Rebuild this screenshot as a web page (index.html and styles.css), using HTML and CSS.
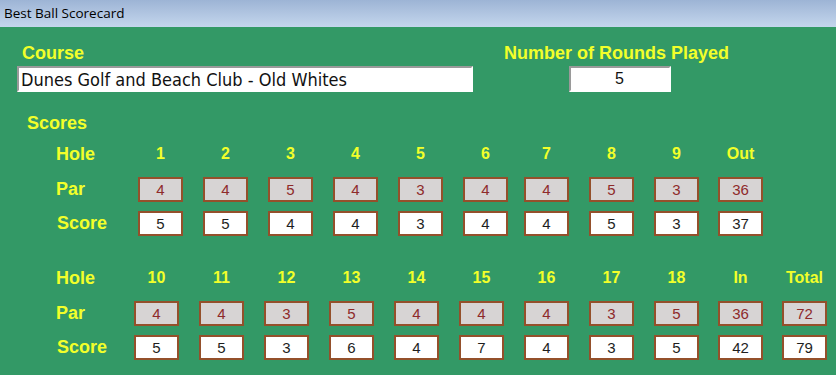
FILE: index.html
```html
<!DOCTYPE html>
<html lang="en">
<head>
<meta charset="UTF-8">
<title>Best Ball Scorecard</title>
<link rel="stylesheet" href="styles.css">
</head>
<body>
    <div class="titlebar">Best Ball Scorecard</div>
    <div class="form">
        <div class="top">
            <div class="field course">
                <label for="course">Course</label>
                <input type="text" id="course" value="Dunes Golf and Beach Club - Old Whites">
            </div>
            <div class="field rounds">
                <label for="rounds">Number of Rounds Played</label>
                <input type="text" id="rounds" value="5">
            </div>
        </div>

        <div class="section">Scores</div>

        <div class="card front">
            <div class="lbl">Hole</div>
            <div class="hd">1</div><div class="hd">2</div><div class="hd">3</div><div class="hd">4</div><div class="hd">5</div>
            <div class="hd">6</div><div class="hd">7</div><div class="hd">8</div><div class="hd">9</div><div class="hd">Out</div>

            <div class="lbl">Par</div>
            <div class="box par">4</div><div class="box par">4</div><div class="box par">5</div><div class="box par">4</div><div class="box par">3</div>
            <div class="box par">4</div><div class="box par">4</div><div class="box par">5</div><div class="box par">3</div><div class="box par">36</div>

            <div class="lbl score-lbl">Score</div>
            <div class="box">5</div><div class="box">5</div><div class="box">4</div><div class="box">4</div><div class="box">3</div>
            <div class="box">4</div><div class="box">4</div><div class="box">5</div><div class="box">3</div><div class="box">37</div>
        </div>

        <div class="card back">
            <div class="lbl">Hole</div>
            <div class="hd">10</div><div class="hd">11</div><div class="hd">12</div><div class="hd">13</div><div class="hd">14</div>
            <div class="hd">15</div><div class="hd">16</div><div class="hd">17</div><div class="hd">18</div><div class="hd">In</div>
            <div class="hd">Total</div>

            <div class="lbl">Par</div>
            <div class="box par">4</div><div class="box par">4</div><div class="box par">3</div><div class="box par">5</div><div class="box par">4</div>
            <div class="box par">4</div><div class="box par">4</div><div class="box par">3</div><div class="box par">5</div><div class="box par">36</div>
            <div class="box par">72</div>

            <div class="lbl score-lbl">Score</div>
            <div class="box">5</div><div class="box">5</div><div class="box">3</div><div class="box">6</div><div class="box">4</div>
            <div class="box">7</div><div class="box">4</div><div class="box">3</div><div class="box">5</div><div class="box">42</div>
            <div class="box">79</div>
        </div>
    </div>
</body>
</html>
```
FILE: styles.css
```css
body {
    margin: 0;
    padding: 0;
    background-color: #339966;
    font-family: "Liberation Sans", Arial, sans-serif;
    height: 375px;
    overflow: hidden;
}
.titlebar {
    height: 27px;
    box-sizing: border-box;
    padding: 5px 0 0 4px;
    font: 13.5px/16px "Open Sans", "DejaVu Sans", sans-serif;
    color: #000;
    background: linear-gradient(#9db4d5, #c4d6ed);
}
.form {
    padding: 16px 0 0 17px;
}
.top {
    display: flex;
    gap: 31px;
}
.field {
    display: flex;
    flex-direction: column;
}
label,
.section,
.lbl {
    font-weight: bold;
    font-size: 18px;
    line-height: 20px;
    color: #f2ff2a;
}
.course label {
    margin-left: 5px;
    margin-bottom: 3px;
}
.rounds {
    align-items: center;
}
.rounds label {
    margin-bottom: 3px;
}
input[type="text"] {
    box-sizing: border-box;
    height: 26px;
    margin: 0;
    background: #fff;
    border: 2px solid #fff;
    border-top-color: #9a9a9a;
    border-left-color: #9a9a9a;
    color: #111;
    outline: none;
}
#course {
    width: 456px;
    padding: 0 2px;
    font-family: "DejaVu Sans", sans-serif;
    font-stretch: condensed;
    font-size: 18px;
}
#rounds {
    width: 102px;
    margin-left: 6px;
    text-align: center;
    font: 16px "Liberation Sans", Arial, sans-serif;
}
.section {
    margin: 21px 0 0 10px;
}
.card {
    display: grid;
    grid-template-rows: 26px 25px 25px;
    row-gap: 9px;
    margin-left: 39px;
    margin-top: 9px;
}
.front {
    grid-template-columns: 82px repeat(5, 65px) 61px 65px 65px 64px 45px;
}
.back {
    grid-template-columns: 78px repeat(8, 65px) 64px 64px 45px;
    margin-top: 30px;
}
.lbl {
    line-height: 25px;
}
.score-lbl {
    margin-left: 1px;
}
.hd {
    width: 45px;
    text-align: center;
    font-weight: bold;
    font-size: 16px;
    line-height: 24px;
    color: #f2ff2a;
}
.box {
    box-sizing: border-box;
    width: 45px;
    height: 25px;
    border: 2px solid #94502b;
    background: #fff;
    color: #1e1e1e;
    text-align: center;
    font-size: 15px;
    line-height: 21px;
}
.par {
    background: #d7d4d4;
    color: #8e2a2a;
}
```
